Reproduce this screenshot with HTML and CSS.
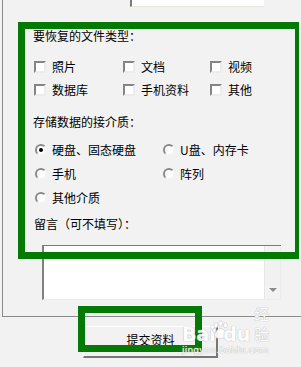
FILE: index.html
```html
<!DOCTYPE html>
<html lang="zh-CN">
<head>
<meta charset="utf-8">
<title>数据恢复表单</title>
<link rel="stylesheet" href="styles.css">
</head>
<body>
<div class="page">
  <div class="frame">
    <div class="top-input"></div>
    <div class="content">
      <div class="label title1">要恢复的文件类型：</div>
      <div class="checks">
        <label class="opt"><span class="cb"></span>照片</label>
        <label class="opt"><span class="cb"></span>文档</label>
        <label class="opt"><span class="cb"></span>视频</label>
        <label class="opt"><span class="cb"></span>数据库</label>
        <label class="opt"><span class="cb"></span>手机资料</label>
        <label class="opt"><span class="cb"></span>其他</label>
      </div>
      <div class="label title2">存储数据的接介质：</div>
      <div class="radios">
        <label class="opt"><span class="rb on"></span>硬盘、固态硬盘</label>
        <label class="opt"><span class="rb"></span>U盘、内存卡</label>
        <label class="opt"><span class="rb"></span>手机</label>
        <label class="opt"><span class="rb"></span>阵列</label>
        <label class="opt"><span class="rb"></span>其他介质</label>
      </div>
      <div class="label note">留言（可不填写）：</div>
      <div class="textarea">
        <div class="ta-body"></div>
        <div class="scrollbar">
          <div class="sb-up"></div>
          <div class="sb-track"></div>
          <div class="sb-down"><span class="arrow"></span></div>
        </div>
      </div>
    </div>
  </div>
  <div class="btn">提交资料</div>

  <div class="mark mark-form"></div>
  <div class="mark mark-btn"></div>

  <div class="watermark">
    <div class="wm-line">
      <span class="wm-bai">Bai</span>
      <svg class="wm-paw" width="22" height="24" viewBox="0 0 22 24">
        <g fill="#ffffff" stroke="#cfcfcf" stroke-width="1">
          <ellipse cx="5" cy="6" rx="2.6" ry="3.4"/>
          <ellipse cx="11" cy="3.8" rx="2.6" ry="3.2"/>
          <ellipse cx="17" cy="6" rx="2.6" ry="3.4"/>
          <ellipse cx="2.8" cy="12.5" rx="2.2" ry="2.8"/>
          <path d="M11 10c-4 0-7.5 5.5-7.5 9 0 3 3 3.6 7.5 3.6s7.5-.6 7.5-3.6c0-3.5-3.5-9-7.5-9z"/>
        </g>
      </svg>
      <span class="wm-du">du</span>
      <span class="wm-jy">经验</span>
    </div>
    <div class="wm-url">jingyan.baidu.com</div>
  </div>
</div>
</body>
</html>
```

FILE: styles.css
```css
* { box-sizing: border-box; }

html, body {
  margin: 0;
  padding: 0;
  background: #f2f2f2;
}

body {
  width: 301px;
  height: 367px;
  overflow: hidden;
  font-family: "Noto Sans CJK SC", "Noto Sans", sans-serif;
  font-size: 12px;
  color: #000;
}

.page {
  position: relative;
  width: 301px;
  height: 367px;
  overflow: hidden;
  background: #f2f2f2;
}

/* outer group box */
.frame {
  margin-left: 2px;
  width: 299px;
  height: 317px;
  border-left: 1px solid #8a8a8a;
  border-bottom: 1px solid #8a8a8a;
}

.top-input {
  margin-left: 127px;
  width: 134px;
  height: 7px;
  background: #fff;
  border-left: 2px solid #7c7c7c;
  border-bottom: 1px solid #e8e8e0;
}

.content {
  padding-left: 31px;
}

.label {
  line-height: 14px;
  height: 14px;
  white-space: nowrap;
}

.title1 {
  margin-top: 22px;
  margin-left: -1px;
}

.checks {
  margin-top: 17px;
  display: grid;
  grid-template-columns: 89px 87px auto;
  row-gap: 9px;
}

.opt {
  display: flex;
  align-items: center;
  height: 14px;
  line-height: 14px;
  white-space: nowrap;
}

.cb {
  width: 12px;
  height: 12px;
  margin-right: 6px;
  background: #fff;
  border: 2px solid;
  border-color: #858585 #ececec #ececec #858585;
  flex: none;
}

.title2 {
  margin-top: 18px;
  margin-left: -1px;
}

.radios {
  margin-top: 14px;
  margin-left: 1px;
  display: grid;
  grid-template-columns: 128px auto;
  row-gap: 10px;
}

.rb {
  position: relative;
  width: 12px;
  height: 12px;
  margin-right: 5px;
  border-radius: 50%;
  background: #fff;
  border: 2px solid;
  border-color: #8a8a8a #f4f4f4 #f4f4f4 #8a8a8a;
  flex: none;
}

.rb.on::after {
  content: "";
  position: absolute;
  left: 2px;
  top: 2px;
  width: 4px;
  height: 4px;
  border-radius: 50%;
  background: #000;
}

.note {
  margin-top: 12px;
}

.textarea {
  margin-top: 14px;
  margin-left: 8px;
  width: 239px;
  height: 55px;
  display: flex;
  background: #fff;
  border-top: 1px solid #7a7a7a;
  border-left: 2px solid #808080;
  border-bottom: 1px solid #ececec;
}

.ta-body {
  flex: 1;
}

.scrollbar {
  width: 17px;
  display: flex;
  flex-direction: column;
  background: #f3f3f3;
  border-left: 1px solid #e6e6e6;
  border-right: 1px solid #ececec;
}

.sb-up {
  height: 13px;
  border-bottom: 2px solid #c8c8c8;
}

.sb-track {
  flex: 1;
  background: #f1f1f1;
}

.sb-down {
  height: 14px;
  display: flex;
  justify-content: center;
  align-items: flex-start;
  padding-top: 3px;
}

.arrow {
  width: 0;
  height: 0;
  border-left: 4px solid transparent;
  border-right: 4px solid transparent;
  border-top: 4px solid #8c8c8c;
}

.btn {
  margin-top: 9px;
  margin-left: 83px;
  width: 135px;
  height: 32px;
  background: #f2f2f2;
  border-top: 1px solid #ffffff;
  border-left: 1px solid #ffffff;
  border-right: 2px solid #767676;
  border-bottom: 2px solid #767676;
  display: flex;
  align-items: center;
  justify-content: center;
  padding-bottom: 3px;
  padding-left: 1px;
  line-height: 14px;
}

/* green annotation rectangles drawn over the screenshot */
.mark {
  position: absolute;
  border: 7px solid #047a04;
}

.mark-form {
  left: 18px;
  top: 22px;
  width: 281px;
  height: 237px;
  border-right-width: 4px;
}

.mark-btn {
  left: 78px;
  top: 306px;
  width: 124px;
  height: 46px;
}

/* watermark overlay */
.watermark {
  position: absolute;
  left: 182px;
  top: 318px;
  width: 96px;
  color: #ffffff;
  font-family: "DejaVu Sans", sans-serif;
  opacity: 0.9;
}

.wm-line {
  display: flex;
  align-items: flex-end;
  height: 26px;
}

.wm-bai, .wm-du {
  font-size: 19px;
  font-weight: bold;
  line-height: 20px;
  text-shadow: 0 0 1px #b8b8b8, 0 0 1px #b8b8b8;
}

.wm-paw {
  margin: 0 -6px 0 -4px;
  align-self: flex-start;
}

.wm-jy {
  margin-left: 4px;
  font-family: "Noto Sans CJK SC", sans-serif;
  font-size: 15px;
  line-height: 20px;
  text-shadow: 0 0 1px #b8b8b8, 0 0 1px #b8b8b8;
}

.wm-url {
  margin-top: 1px;
  font-size: 9px;
  line-height: 10px;
  letter-spacing: 0.2px;
  text-shadow: 0 0 1px #b0b0b0, 0 0 1px #b0b0b0;
}
```
